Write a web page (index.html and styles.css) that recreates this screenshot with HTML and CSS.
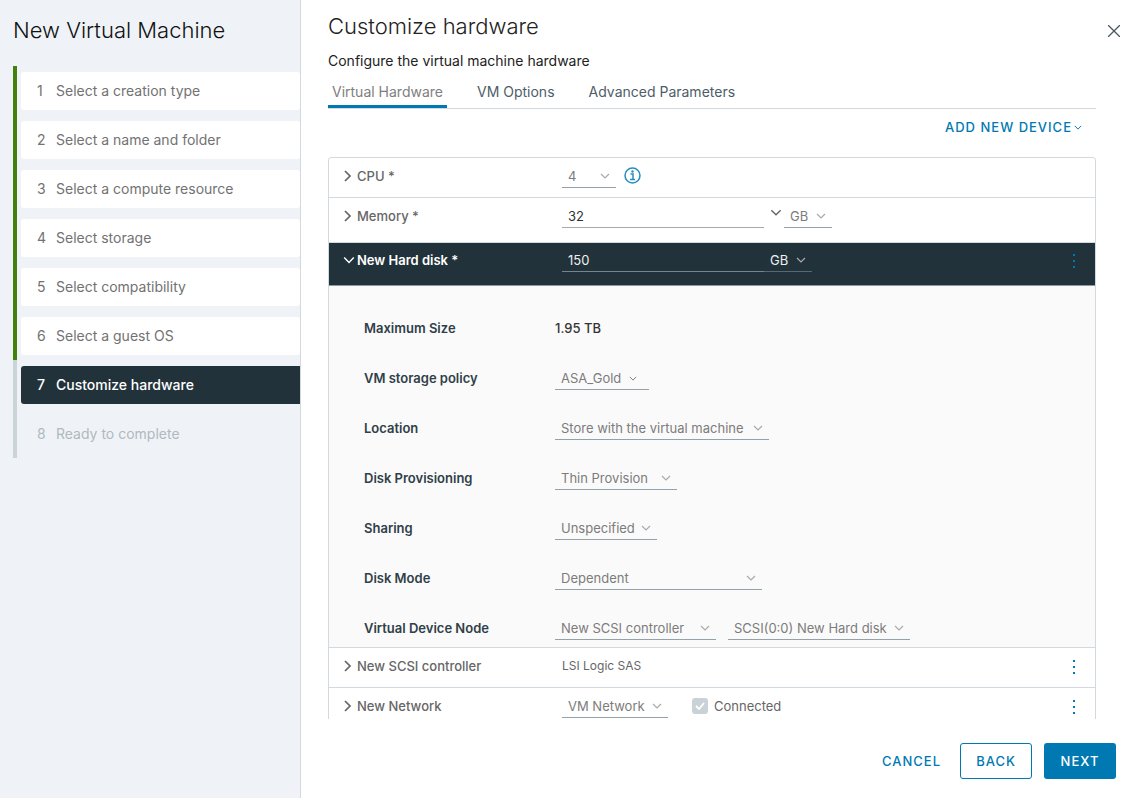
FILE: index.html
```html
<!DOCTYPE html>
<html lang="en">
<head>
<meta charset="utf-8">
<title>New Virtual Machine</title>
<link rel="stylesheet" href="styles.css">
</head>
<body>
<svg class="defs" aria-hidden="true">
  <symbol id="chevron" viewBox="0 0 10 6"><path d="M1 1l4 4 4-4" fill="none" stroke="currentColor" stroke-width="1.2"/></symbol>
  <symbol id="caret" viewBox="0 0 10 12"><path d="M2 1l5 5-5 5" fill="none" stroke="currentColor" stroke-width="1.7"/></symbol>
  <symbol id="kebab" viewBox="0 0 4 16"><path d="M1 1h2v2H1zM1 7h2v2H1zM1 13h2v2H1z" fill="currentColor"/></symbol>
</svg>
<div class="wizard">
  <aside class="sidebar">
    <h1 class="wizard-title">New Virtual Machine</h1>
    <ol class="steps">
      <li class="step done"><button class="step-button"><span class="num">1</span>Select a creation type</button></li>
      <li class="step done"><button class="step-button"><span class="num">2</span>Select a name and folder</button></li>
      <li class="step done"><button class="step-button"><span class="num">3</span>Select a compute resource</button></li>
      <li class="step done"><button class="step-button"><span class="num">4</span>Select storage</button></li>
      <li class="step done"><button class="step-button"><span class="num">5</span>Select compatibility</button></li>
      <li class="step done"><button class="step-button"><span class="num">6</span>Select a guest OS</button></li>
      <li class="step current"><button class="step-button" aria-current="step"><span class="num">7</span>Customize hardware</button></li>
      <li class="step"><button class="step-button" disabled><span class="num">8</span>Ready to complete</button></li>
    </ol>
  </aside>
  <main class="page">
    <header class="page-header">
      <div>
        <h2 class="page-title">Customize hardware</h2>
        <p class="subtitle">Configure the virtual machine hardware</p>
      </div>
      <button class="close" aria-label="Close"><svg width="12" height="12" viewBox="0 0 12 12"><path d="M0 0l12 12M12 0L0 12" fill="none" stroke="currentColor" stroke-width="1.3"/></svg></button>
    </header>
    <div class="content">
      <nav class="tabs">
        <button class="tab active">Virtual Hardware</button>
        <button class="tab">VM Options</button>
        <button class="tab">Advanced Parameters</button>
      </nav>
      <div class="toolbar">
        <button class="add-device">ADD NEW DEVICE <svg width="8" height="5"><use href="#chevron"/></svg></button>
      </div>
      <div class="devices">
        <section class="device">
          <button class="device-name"><svg width="10" height="12"><use href="#caret"/></svg><span>CPU *</span></button>
          <div class="device-value">
            <span class="select w-cpu"><select aria-label="CPU"><option>4</option></select><svg width="10" height="6"><use href="#chevron"/></svg></span>
            <button class="info" aria-label="CPU information"><svg width="17" height="17" viewBox="0 0 17 17" fill="none" stroke="currentColor"><circle cx="8.500" cy="8.500" r="7.500" stroke-width="1.500"/><path d="M6.500 7h2.500v5M6 12.500h5" stroke-width="1.500"/><circle cx="8.500" cy="4.500" r="1.200" fill="currentColor" stroke="none"/></svg></button>
          </div>
        </section>
        <section class="device tall">
          <button class="device-name"><svg width="10" height="12"><use href="#caret"/></svg><span>Memory *</span></button>
          <div class="device-value">
            <input class="field" aria-label="Memory" value="32">
            <button class="combo" aria-label="Memory sizes"><svg width="12" height="7"><use href="#chevron"/></svg></button>
            <span class="select w-unit"><select aria-label="Memory unit"><option>GB</option></select><svg width="10" height="6"><use href="#chevron"/></svg></span>
          </div>
        </section>
        <section class="device expanded">
          <button class="device-name"><svg width="12" height="8"><use href="#chevron"/></svg><span>New Hard disk *</span></button>
          <div class="device-value">
            <input class="field" aria-label="Hard disk size" value="150">
            <span class="select w-unit"><select aria-label="Hard disk unit"><option>GB</option></select><svg width="10" height="6"><use href="#chevron"/></svg></span>
          </div>
          <button class="kebab" aria-label="Hard disk actions"><svg width="4" height="16"><use href="#kebab"/></svg></button>
        </section>
        <div class="details">
          <div class="detail"><span class="detail-label">Maximum Size</span><span class="size">1.95 TB</span></div>
          <div class="detail"><label class="detail-label" for="policy">VM storage policy</label><span class="select w-policy"><select id="policy"><option>ASA_Gold</option></select><svg width="8" height="5"><use href="#chevron"/></svg></span></div>
          <div class="detail"><label class="detail-label" for="location">Location</label><span class="select w-location"><select id="location"><option>Store with the virtual machine</option></select><svg width="10" height="6"><use href="#chevron"/></svg></span></div>
          <div class="detail"><label class="detail-label" for="prov">Disk Provisioning</label><span class="select w-prov"><select id="prov"><option>Thin Provision</option></select><svg width="10" height="6"><use href="#chevron"/></svg></span></div>
          <div class="detail"><label class="detail-label" for="sharing">Sharing</label><span class="select w-sharing"><select id="sharing"><option>Unspecified</option></select><svg width="10" height="6"><use href="#chevron"/></svg></span></div>
          <div class="detail"><label class="detail-label" for="mode">Disk Mode</label><span class="select w-mode"><select id="mode"><option>Dependent</option></select><svg width="10" height="6"><use href="#chevron"/></svg></span></div>
          <div class="detail"><label class="detail-label" for="node">Virtual Device Node</label><span class="select w-node"><select id="node"><option>New SCSI controller</option></select><svg width="10" height="6"><use href="#chevron"/></svg></span><span class="select w-slot"><select aria-label="Device slot"><option>SCSI(0:0) New Hard disk</option></select><svg width="10" height="6"><use href="#chevron"/></svg></span></div>
        </div>
        <section class="device">
          <button class="device-name"><svg width="10" height="12"><use href="#caret"/></svg><span>New SCSI controller</span></button>
          <div class="device-value"><span class="plain">LSI Logic SAS</span></div>
          <button class="kebab" aria-label="SCSI controller actions"><svg width="4" height="16"><use href="#kebab"/></svg></button>
        </section>
        <section class="device">
          <button class="device-name"><svg width="10" height="12"><use href="#caret"/></svg><span>New Network</span></button>
          <div class="device-value">
            <span class="select w-network"><select aria-label="Network"><option>VM Network</option></select><svg width="10" height="6"><use href="#chevron"/></svg></span>
            <label class="check"><span class="box"><input type="checkbox" checked disabled><svg width="10" height="8" viewBox="0 0 10 8"><path d="M1 4l3 3 5-6" fill="none" stroke="currentColor" stroke-width="1.800"/></svg></span>Connected</label>
          </div>
          <button class="kebab" aria-label="Network actions"><svg width="4" height="16"><use href="#kebab"/></svg></button>
        </section>
      </div>
    </div>
    <footer class="footer">
      <button class="btn link">CANCEL</button>
      <button class="btn outline">BACK</button>
      <button class="btn primary">NEXT</button>
    </footer>
  </main>
</div>
</body>
</html>
```
FILE: styles.css
```css
* { box-sizing: border-box; }
body { margin: 0; font: 13px/24px Inter, "Noto Sans", sans-serif; color: #666; background: #fff; }
button, input, select { font: inherit; color: inherit; background: none; border: 0; border-radius: 0; padding: 0; margin: 0; }
button { cursor: pointer; }
h1, h2, p, ol { margin: 0; padding: 0; }
svg { display: block; flex: none; }
.defs { position: absolute; width: 0; height: 0; }

.wizard { display: grid; grid-template-columns: 301px minmax(0, 1fr); grid-template-rows: minmax(0, 1fr); height: 100vh; }
.sidebar { background: #eff3f8; border-right: 1px solid #d3dadf; padding: 14px 0 0 13px; }
.wizard-title, .page-title { font-size: 22px; line-height: 32px; font-weight: 300; color: #111; }
.steps { list-style: none; margin-top: 20px; }
.step { height: 49px; border-left: 4px solid #cbd4d8; padding: 6px 0 5px 4px; }
.step.done { border-color: #42810e; }
.step-button { display: flex; align-items: center; gap: 7px; width: 100%; height: 38px; padding-left: 16px; border-radius: 3px; text-align: left; font-size: 14px; color: #727272; }
.num { width: 12px; }
.done .step-button { background: #fff; }
.current .step-button { background: #22323b; color: #fff; font-weight: 500; border-radius: 3px 0 0 3px; }
.step-button:disabled { color: #b0b9bd; }

.page { display: flex; flex-direction: column; min-width: 0; padding-left: 27px; }
.page-header { display: flex; justify-content: space-between; padding: 10px 2px 0 0; }
.page-title { color: #222; }
.subtitle { margin-top: 6px; font-size: 14px; line-height: 26px; color: #222; }
.close { display: grid; place-items: center; width: 12px; height: 12px; margin-top: 15px; color: #455860; }
.content { flex: 1; min-height: 0; overflow: hidden; margin-right: 26px; }
.tabs { display: flex; gap: 26px; border-bottom: 1px solid #d3dadf; height: 35px; }
.tab { height: 34px; padding: 4px 4px 0; font-size: 14px; color: #4d5d69; border-bottom: 3px solid transparent; }
.tab.active { color: #808080; border-color: #0079b3; }
.toolbar { display: flex; justify-content: flex-end; padding: 6px 14px 0 0; height: 48px; }
.add-device { display: flex; align-items: center; gap: 2px; height: 24px; font-weight: 500; letter-spacing: 1px; color: #0079b3; }

.devices { border: 1px solid #d3dadf; border-radius: 3px; }
.device { display: grid; grid-template-columns: 219px minmax(0, 1fr) 42px; align-items: start; height: 40px; padding: 6px 0 0 14px; border-bottom: 1px solid #d3dadf; }
.device.tall { height: 45px; }
.device.expanded { height: 43px; padding-top: 5px; background: #22323b; color: #fff; border-color: #8b999f; }
.expanded .device-name { font-weight: 600; }
.expanded .device-value { color: #eee; gap: 0; }
.device-name { display: grid; grid-template-columns: 12px auto; gap: 2px; align-items: center; justify-content: start; height: 24px; font-weight: 500; }
.device-value { display: flex; gap: 8px; }
.field { width: 202px; height: 24px; padding: 0 6px; border-bottom: 1px solid #a5acaf; color: #333; }
.expanded .field { color: inherit; border-color: #77848a; }
.combo { display: grid; place-items: center; width: 12px; height: 16px; margin: 0 -6px 0 -2px; }
.kebab { display: grid; place-items: center; justify-self: center; width: 12px; height: 26px; color: #0079b3; }
.info { height: 22px; color: #248fc0; }
.select { display: grid; align-items: center; }
.select select { grid-area: 1 / 1; appearance: none; width: 100%; height: 24px; padding: 0 6px; border-bottom: 1px solid #93a2a9; color: #7c7c7c; }
.select svg { grid-area: 1 / 1; justify-self: end; margin-right: 6px; color: #aaa; pointer-events: none; }
.expanded .select select { color: #eee; border-color: #566870; }
.w-cpu { width: 54px; }
.w-unit { width: 48px; }
.w-policy { width: 94px; }
.w-policy svg { margin-right: 12px; color: #777; }
.w-location { width: 214px; }
.w-prov { width: 122px; }
.w-sharing { width: 102px; }
.w-mode { width: 207px; }
.w-node { width: 161px; }
.w-slot { width: 182px; }
.w-network { width: 106px; }
.plain { font-size: 12px; }
.check { display: flex; align-items: center; gap: 6px; margin-left: 16px; }
.box { display: grid; place-items: center; width: 16px; height: 16px; border-radius: 3px; background: #c8d2d7; color: #fff; }
.box input { grid-area: 1 / 1; appearance: none; width: 16px; height: 16px; }
.box svg { grid-area: 1 / 1; }

.details { display: grid; gap: 12px; padding: 23px 0 0 35px; background: #fafafa; border-bottom: 1px solid #d3dadf; }
.detail { display: flex; align-items: center; height: 38px; gap: 12px; }
.detail-label { width: 179px; font-weight: 600; color: #304048; }
.size { font-weight: 500; color: #333; }

.footer { display: flex; justify-content: flex-end; gap: 12px; padding: 24px 6px 19px 0; }
.btn { height: 36px; padding: 0 15px; border: 1px solid transparent; border-radius: 3px; font-weight: 500; letter-spacing: 1px; color: #0079b3; }
.btn.link { padding: 0 6px; }
.btn.outline { border-color: #0079b3; min-width: 72px; }
.btn.primary { min-width: 72px; background: #0079b3; color: #fff; }
```
